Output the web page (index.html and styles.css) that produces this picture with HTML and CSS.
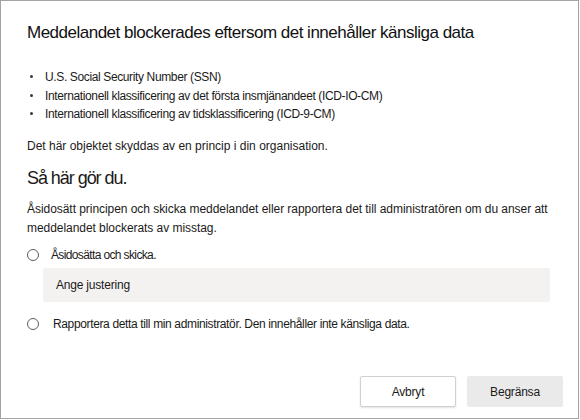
FILE: index.html
```html
<!DOCTYPE html>
<html lang="sv">
<head>
<meta charset="utf-8">
<title>Meddelandet blockerades</title>
<link rel="stylesheet" href="styles.css">
</head>
<body>
<div class="dialog">
  <h1 class="title">Meddelandet blockerades eftersom det innehåller känsliga data</h1>
  <ul class="types">
    <li>U.S. Social Security Number (SSN)</li>
    <li>Internationell klassificering av det första insmjänandeet (ICD-IO-CM)</li>
    <li>Internationell klassificering av tidsklassificering (ICD-9-CM)</li>
  </ul>
  <p class="policy">Det här objektet skyddas av en princip i din organisation.</p>
  <h2 class="subtitle">Så här gör du.</h2>
  <p class="desc">Åsidosätt principen och skicka meddelandet eller rapportera det till administratören om du anser att meddelandet blockerats av misstag.</p>
  <label class="option first"><span class="radio"></span><span class="label">Åsidosätta och skicka.</span></label>
  <div class="justify">Ange justering</div>
  <label class="option second"><span class="radio"></span><span class="label">Rapportera detta till min administratör. Den innehåller inte känsliga data.</span></label>
  <div class="actions">
    <button class="btn cancel">Avbryt</button>
    <button class="btn primary">Begränsa</button>
  </div>
</div>
</body>
</html>
```
FILE: styles.css
```css
html, body { margin: 0; padding: 0; background: #fff; }
body { font-family: "Liberation Sans", Arial, sans-serif; color: #1b1a19; }
.dialog {
  box-sizing: border-box;
  width: 579px;
  height: 419px;
  border: 1px solid #a3a3a3;
  display: flex;
  flex-direction: column;
  padding: 0 0 0 26px;
}
.title {
  margin: 21px 0 0;
  font-size: 17px;
  font-weight: normal;
  line-height: 22px;
  letter-spacing: -0.5px;
  color: #111;
}
.types {
  margin: 24px 0 0;
  padding: 0;
  list-style: none;
  font-size: 12px;
  line-height: 18.5px;
  letter-spacing: -0.37px;
}
.types li::before {
  content: "";
  display: inline-block;
  width: 3px;
  height: 3px;
  border-radius: 50%;
  background: #3b3a39;
  vertical-align: 3px;
  margin: 0 12px 0 3px;
}
.policy {
  margin: 13px 0 0;
  font-size: 12px;
  line-height: 18px;
  letter-spacing: 0;
}
.subtitle {
  margin: 12px 0 0;
  font-size: 18px;
  font-weight: normal;
  line-height: 22px;
  letter-spacing: -1.05px;
}
.desc {
  margin: 11px 0 0;
  width: 540px;
  font-size: 12px;
  line-height: 19.5px;
  letter-spacing: -0.05px;
}
.option {
  display: flex;
  align-items: center;
  gap: 12px;
  font-size: 12px;
  line-height: 18px;
}
.option.first { margin-top: 7px; letter-spacing: -0.63px; }
.option.second { margin-top: 13px; letter-spacing: -0.36px; }
.option.second .label { padding-left: 2px; }
.radio {
  box-sizing: border-box;
  width: 12px;
  height: 12px;
  border: 1px solid #605e5c;
  border-radius: 50%;
  flex: none;
}
.justify {
  margin: 4px 0 0 16px;
  width: 507px;
  height: 34px;
  box-sizing: border-box;
  padding: 0 0 0 13px;
  background: #f3f2f1;
  border-radius: 2px;
  font-size: 12px;
  line-height: 34px;
  letter-spacing: -0.2px;
}
.actions {
  margin-top: auto;
  margin-bottom: 11px;
  display: flex;
  justify-content: flex-end;
  gap: 11px;
  padding-right: 15px;
}
.btn {
  box-sizing: border-box;
  width: 96px;
  height: 31px;
  font-family: "Liberation Sans", Arial, sans-serif;
  font-size: 12px;
  color: #1b1a19;
  border-radius: 2px;
  letter-spacing: -0.2px;
}
.cancel {
  background: #fff;
  border: 1px solid #d2d0ce;
  box-shadow: 0 1px 2px rgba(0,0,0,0.12);
}
.primary {
  background: #eaeaea;
  border: 1px solid #eaeaea;
}
```
